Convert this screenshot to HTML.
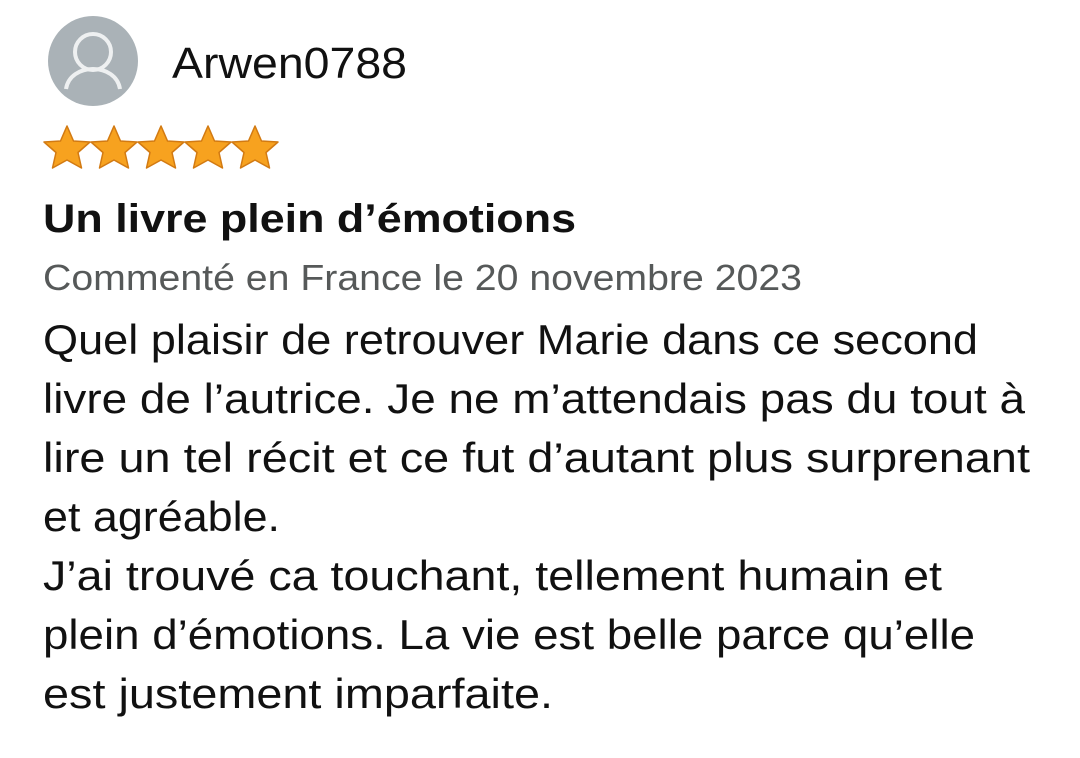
<!DOCTYPE html>
<html><head><meta charset="utf-8"><style>
html,body{margin:0;padding:0;background:#fff;width:1080px;height:758px;overflow:hidden}
svg{display:block}
text{font-family:"Liberation Sans",sans-serif}
</style></head><body>
<svg width="1080" height="758" viewBox="0 0 1080 758" xmlns="http://www.w3.org/2000/svg">
<circle cx="93" cy="61" r="45" fill="#aab2b7"/>
<circle cx="93" cy="52" r="18" fill="none" stroke="#eef0f1" stroke-width="4"/>
<path d="M66 89 C68 76 80 69 93 69 C106 69 118 76 120 89" fill="none" stroke="#eef0f1" stroke-width="4"/>
<text x="172" y="78" font-size="44" fill="#111" textLength="235" lengthAdjust="spacingAndGlyphs">Arwen0788</text>
<g fill="#f7a21f" stroke="#d27a12" stroke-width="1.5" stroke-linejoin="round">
<path id="s" d="M67 126 L73.5 141 L90 142 L78 152.5 L81.5 168 L67 160 L52.5 168 L56 152.5 L44 142 L60.5 141 Z"/>
<use href="#s" x="47"/><use href="#s" x="94"/><use href="#s" x="141"/><use href="#s" x="188"/>
</g>
<text x="43" y="232" font-size="40" font-weight="bold" fill="#111" textLength="533" lengthAdjust="spacingAndGlyphs">Un livre plein d’émotions</text>
<text x="43" y="290" font-size="36" fill="#565959" textLength="759" lengthAdjust="spacingAndGlyphs">Commenté en France le 20 novembre 2023</text>
<g font-size="42" fill="#111">
<text x="43" y="354" textLength="935" lengthAdjust="spacingAndGlyphs">Quel plaisir de retrouver Marie dans ce second</text>
<text x="43" y="413" textLength="982" lengthAdjust="spacingAndGlyphs">livre de l’autrice. Je ne m’attendais pas du tout à</text>
<text x="43" y="472" textLength="987" lengthAdjust="spacingAndGlyphs">lire un tel récit et ce fut d’autant plus surprenant</text>
<text x="43" y="531" textLength="237" lengthAdjust="spacingAndGlyphs">et agréable.</text>
<text x="43" y="590" textLength="899" lengthAdjust="spacingAndGlyphs">J’ai trouvé ca touchant, tellement humain et</text>
<text x="43" y="649" textLength="932" lengthAdjust="spacingAndGlyphs">plein d’émotions. La vie est belle parce qu’elle</text>
<text x="43" y="708" textLength="510" lengthAdjust="spacingAndGlyphs">est justement imparfaite.</text>
</g>
</svg>
</body></html>
